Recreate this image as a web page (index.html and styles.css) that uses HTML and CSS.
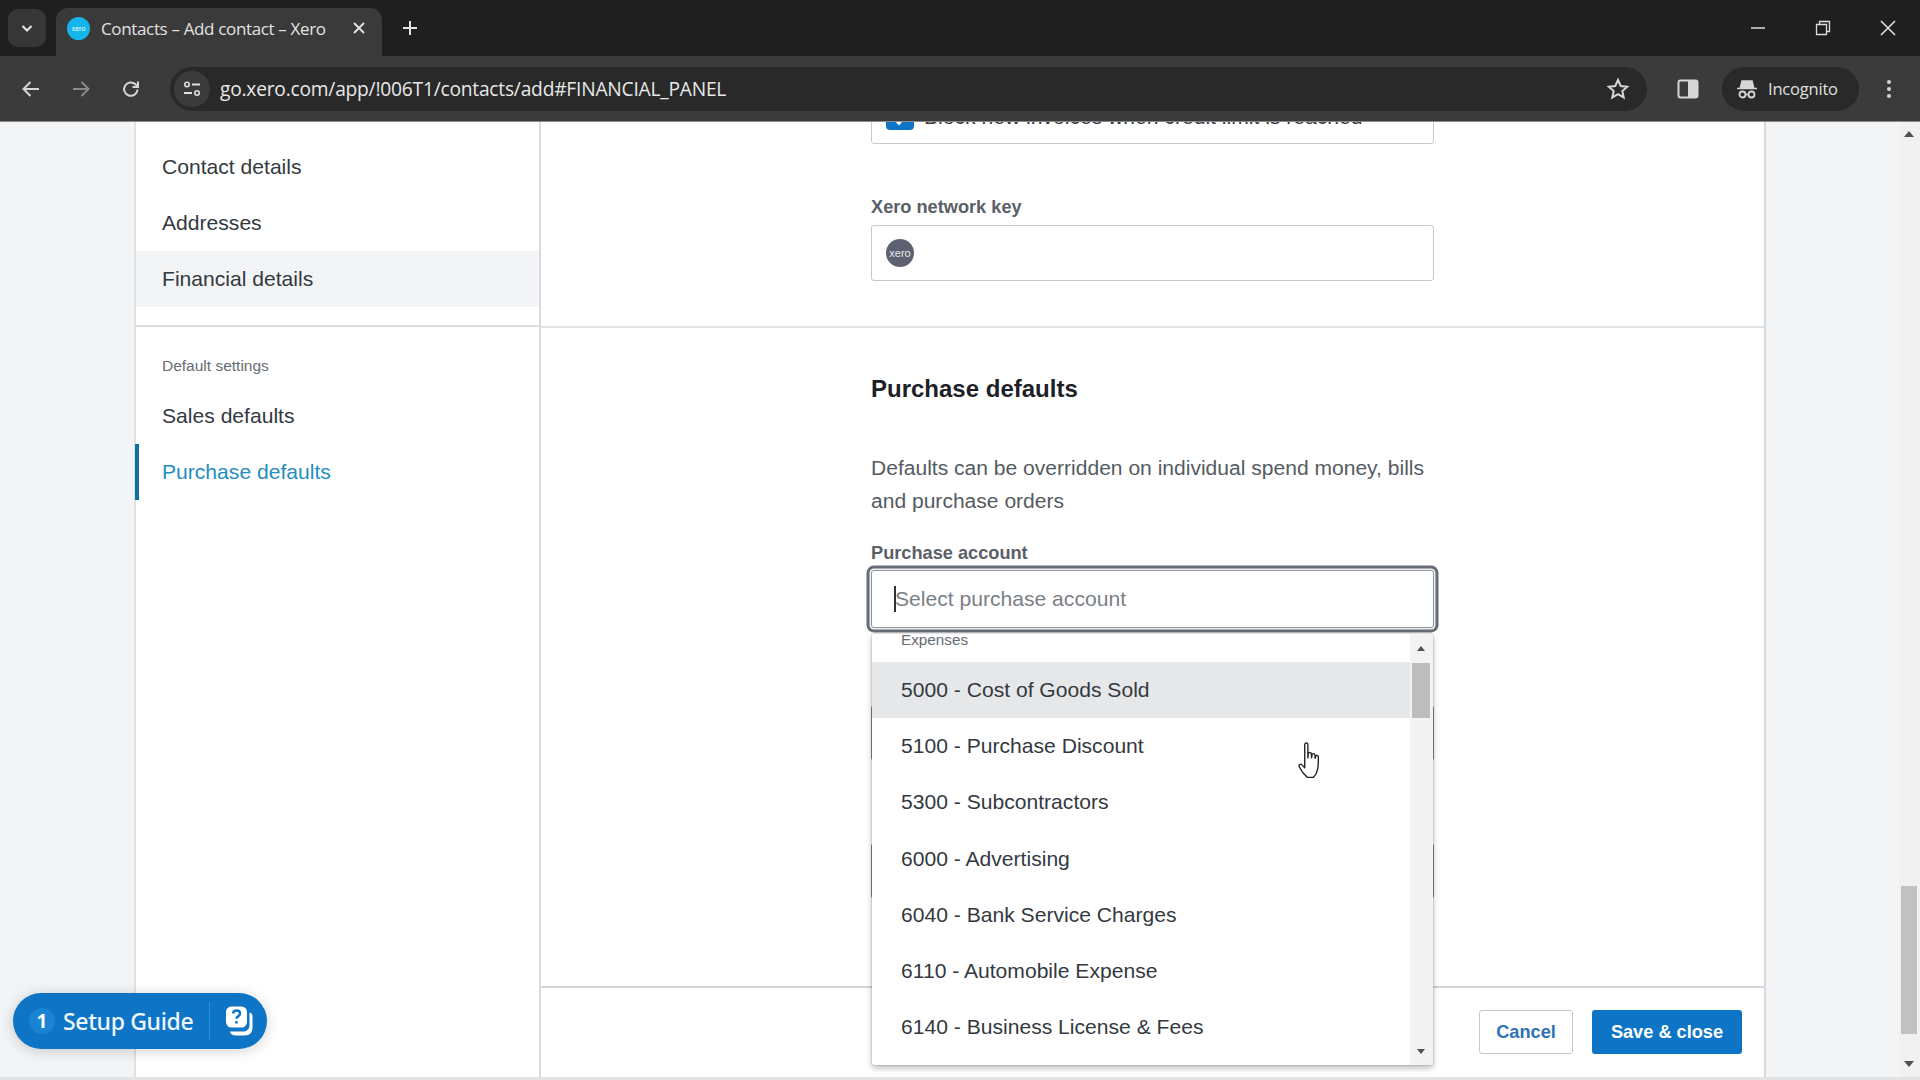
FILE: index.html
```html
<!DOCTYPE html>
<html lang="en">
<head>
<meta charset="utf-8">
<title>Contacts – Add contact – Xero</title>
<link rel="stylesheet" href="styles.css">
</head>
<body>
<header class="chrome">
  <div class="tabstrip">
    <button class="tab-list" aria-label="Tab list"><svg width="16" height="16" viewBox="0 0 16 16"><path d="M3.5 6l4.5 4.5L12.500 6" fill="none" stroke="#e8e8e8" stroke-width="2"/></svg></button>
    <div class="tab">
      <span class="favicon">xero</span>
      <span class="tab-title">Contacts – Add contact – Xero</span>
      <svg class="tab-close" width="14" height="14" viewBox="0 0 14 14"><path d="M2 2l10 10M12 2L2 12" stroke="#e4e4e4" stroke-width="1.800"/></svg>
    </div>
    <svg class="new-tab" width="18" height="18" viewBox="0 0 18 18"><path d="M9 2v14M2 9h14" stroke="#e4e4e4" stroke-width="2"/></svg>
    <div class="window-controls">
      <svg width="16" height="16" viewBox="0 0 16 16"><path d="M1 8h14" stroke="#dcdcdc" stroke-width="1.500"/></svg>
      <svg width="16" height="16" viewBox="0 0 16 16"><path d="M1.500 4.500h10v10h-10zM4.500 4.500v-3h10v10h-3" fill="none" stroke="#dcdcdc" stroke-width="1.300"/></svg>
      <svg width="16" height="16" viewBox="0 0 16 16"><path d="M1 1l14 14M15 1L1 15" stroke="#e4e4e4" stroke-width="1.500"/></svg>
    </div>
  </div>
  <div class="toolbar">
    <svg class="tool-icon" width="20" height="20" viewBox="0 0 20 20"><path d="M18 10H3M9.500 3l-7 7 7 7" fill="none" stroke="#d6d6d6" stroke-width="2"/></svg>
    <svg class="tool-icon dim" width="20" height="20" viewBox="0 0 20 20"><path d="M2 10h15M10.500 3l7 7-7 7" fill="none" stroke="#8a8a8a" stroke-width="2"/></svg>
    <svg class="tool-icon" width="20" height="20" viewBox="0 0 20 20"><path d="M16.500 10.500a6.700 6.700 0 1 1-2-5.200L17 8M17 2.500V8h-5.500" fill="none" stroke="#d6d6d6" stroke-width="2"/></svg>
    <div class="omnibox">
      <span class="site-info"><svg width="20" height="20" viewBox="0 0 20 20"><circle cx="5" cy="5.500" r="2.200" fill="none" stroke="#e0e0e0" stroke-width="1.600"/><path d="M10 5.500h8M2 14h8" stroke="#e0e0e0" stroke-width="1.800"/><circle cx="15" cy="14" r="2.200" fill="none" stroke="#e0e0e0" stroke-width="1.600"/></svg></span>
      <span class="url">go.xero.com/app/!006T1/contacts/add#FINANCIAL_PANEL</span>
      <svg class="star" width="24" height="24" viewBox="0 0 24 24"><path d="M12 3l2.700 6 6.500.7-4.900 4.300 1.400 6.400L12 17.100l-5.700 3.300 1.400-6.400-4.900-4.300 6.500-.7z" fill="none" stroke="#d6d6d6" stroke-width="2"/></svg>
    </div>
    <svg class="side-panel" width="22" height="20" viewBox="0 0 22 20"><rect x="1.500" y="1.500" width="19" height="17" rx="2" fill="none" stroke="#d6d6d6" stroke-width="2"/><rect x="11" y="2" width="9" height="16" fill="#d6d6d6"/></svg>
    <div class="incognito">
      <svg width="22" height="22" viewBox="0 0 22 22"><path d="M6 3h10l1.500 6h-13zM1 10.500h20" fill="#d6d6d6" stroke="#d6d6d6" stroke-width="1.500"/><circle cx="6.500" cy="16.500" r="3" fill="none" stroke="#d6d6d6" stroke-width="1.800"/><circle cx="15.500" cy="16.500" r="3" fill="none" stroke="#d6d6d6" stroke-width="1.800"/><path d="M9.500 16.500h3" stroke="#d6d6d6" stroke-width="1.500"/></svg>
      <span>Incognito</span>
    </div>
    <svg class="menu" width="6" height="20" viewBox="0 0 6 20"><circle cx="3" cy="3" r="2" fill="#d6d6d6"/><circle cx="3" cy="10" r="2" fill="#d6d6d6"/><circle cx="3" cy="17" r="2" fill="#d6d6d6"/></svg>
  </div>
</header>

<div class="viewport">
  <div class="page">
    <div class="panel">
      <nav class="sidebar">
        <a class="nav-item">Contact details</a>
        <a class="nav-item">Addresses</a>
        <a class="nav-item hovered">Financial details</a>
        <hr class="nav-rule">
        <div class="nav-heading">Default settings</div>
        <a class="nav-item">Sales defaults</a>
        <a class="nav-item current">Purchase defaults</a>
      </nav>
      <main class="main">
        <div class="scroll-area">
          <section class="section first">
            <div class="field-box check-box">
              <span class="checkbox"><svg width="14" height="14" viewBox="0 0 14 14"><path d="M3 7l3 3 5-6" fill="none" stroke="#fff" stroke-width="2"/></svg></span>
              <span>Block new invoices when credit limit is reached</span>
            </div>
            <label class="label network-label">Xero network key</label>
            <div class="field-box network-box"><span class="xero-badge">xero</span></div>
          </section>
          <section class="section second">
            <h2 class="section-title">Purchase defaults</h2>
            <p class="section-desc">Defaults can be overridden on individual spend money, bills and purchase orders</p>
            <label class="label purchase-label">Purchase account</label>
            <div class="field-box focused"><span class="caret"></span><span class="placeholder">Select purchase account</span></div>
            <div class="field-box hidden-field one"></div>
            <div class="field-box hidden-field two"></div>
          </section>
        </div>
        <footer class="actions">
          <button class="btn btn-cancel">Cancel</button>
          <button class="btn btn-save">Save &amp; close</button>
        </footer>
      </main>
    </div>
  </div>
  <aside class="page-scrollbar">
    <span class="arrow-up"></span>
    <span class="page-thumb"></span>
    <span class="arrow-down"></span>
  </aside>

  <div class="dropdown">
    <div class="options">
      <div class="group-label">Expenses</div>
      <div class="option active">5000 - Cost of Goods Sold</div>
      <div class="option">5100 - Purchase Discount</div>
      <div class="option">5300 - Subcontractors</div>
      <div class="option">6000 - Advertising</div>
      <div class="option">6040 - Bank Service Charges</div>
      <div class="option">6110 - Automobile Expense</div>
      <div class="option">6140 - Business License &amp; Fees</div>
    </div>
    <div class="dd-scrollbar">
      <span class="arrow-up small"></span>
      <span class="dd-thumb"></span>
      <span class="arrow-down small"></span>
    </div>
  </div>

  <div class="setup-guide">
    <span class="setup-count">1</span>
    <span class="setup-text">Setup Guide</span>
    <span class="setup-sep"></span>
    <svg width="30" height="32" viewBox="0 0 30 32"><path d="M25.500 7.500c2 .5 3 1.500 3 4v11c0 5-3 8-7.500 8h-9c-3.500 0-5.500-1.500-6-4h13c4 0 6.500-2.500 6.500-6.500z" fill="#fff"/><rect x="2" y="1.500" width="21" height="21" rx="5.500" fill="#fff"/><path d="M9 8.500c.3-2 1.800-3 3.600-3 2 0 3.400 1.200 3.400 3 0 2.600-3.300 2.800-3.400 5.200M12.400 16v2.500" fill="none" stroke="#0e75c6" stroke-width="2.500"/></svg>
  </div>

  <svg class="hand-cursor" width="26" height="38" viewBox="0 0 24 36"><path d="M7 2.500c0-2 3-2 3 0V15l.4-4c.2-1.500 2.600-1.500 2.800 0l.3 4 .4-3c.2-1.500 2.600-1.300 2.700.2l.3 3.300.5-2c.4-1.300 2.500-1 2.500.5 0 5 .1 8.500-.7 12-.7 3.500-2.300 6-4 7.500H9.500C6.500 31 3.500 27 1.800 23.500c-.8-1.700 1.200-3.500 2.700-1.800L7 24.500z" fill="#fff" stroke="#222" stroke-width="1.300" stroke-linejoin="round"/></svg>
</div>
<div class="page-bottom"></div>
</body>
</html>
```

FILE: styles.css
```css
* { box-sizing: border-box; }
html, body { margin: 0; height: 100%; overflow: hidden; }
body { display: flex; flex-direction: column; font-family: "Liberation Sans", Arial, sans-serif; color: #2c3238; background: #f2f4f5; }

/* browser chrome */
.chrome { flex: none; font-family: "Open Sans", "Noto Sans", sans-serif; color: #e6e6e6; }
.tabstrip { height: 56px; background: #1f1f1f; display: flex; align-items: flex-end; position: relative; padding-left: 8px; }
.tab-list { width: 38px; height: 38px; margin-bottom: 9px; border: 0; border-radius: 10px; background: #373737; display: flex; align-items: center; justify-content: center; padding: 0; }
.tab { width: 326px; height: 48px; margin-left: 10px; background: #3a3a3a; border-radius: 12px 12px 0 0; display: flex; align-items: center; padding: 0 16px 8px 11px; }
.favicon { width: 23px; height: 23px; border-radius: 50%; background: #13b5ea; color: #fff; font: 7px/23px "Liberation Sans", sans-serif; text-align: center; flex: none; }
.tab-title { margin-left: 11px; font-size: 17px; letter-spacing: -.35px; white-space: nowrap; flex: 1; color: #e2e2e2; }
.new-tab { margin: 0 0 19px 19px; }
.window-controls { margin-left: auto; display: flex; gap: 49px; padding-right: 24px; margin-bottom: 20px; }
.toolbar { height: 66px; background: #3b3b3b; display: flex; align-items: center; border-bottom: 1px solid #8a8a8a; padding-left: 21px; }
.tool-icon { margin-right: 30px; flex: none; }
.tool-icon:nth-child(3) { margin-right: 29px; }
.omnibox { width: 1477px; height: 44px; background: #292929; border-radius: 22px; display: flex; align-items: center; padding: 0 17px 0 4px; }
.site-info { width: 36px; height: 36px; border-radius: 50%; background: #3b3b3b; display: flex; align-items: center; justify-content: center; flex: none; }
.url { margin-left: 10px; font-size: 19.200px; letter-spacing: -.22px; white-space: nowrap; flex: 1; color: #e8e8e8; }
.side-panel { margin-left: 30px; flex: none; }
.incognito { margin-left: 23px; width: 137px; height: 44px; border-radius: 22px; background: #292929; display: flex; align-items: center; gap: 10px; padding-left: 14px; font-size: 16.500px; letter-spacing: -.2px; color: #e0e0e0; flex: none; }
.menu { margin-left: 27px; flex: none; }

/* page */
.viewport { flex: 1; min-height: 0; display: flex; position: relative; }
.page { flex: 1; min-width: 0; padding-left: 134px; padding-right: 133px; background: #f2f4f5; }
.panel { height: 100%; display: flex; background: #fff; border-left: 2px solid #dfe2e4; border-right: 2px solid #d8dbde; }
.sidebar { width: 405px; flex: none; padding-top: 17px; border-right: 2px solid #d8dbde; }
.nav-item { display: flex; align-items: center; height: 56px; padding-left: 26px; font-size: 21.100px; color: #33393f; }
.nav-item.hovered { background: #f2f4f5; }
.nav-item.current { color: #1f8ec0; box-shadow: inset 4px 0 0 #0f6fa8; margin-left: -1px; padding-left: 27px; }
.nav-rule { margin: 18px 0 0; border: 0; border-top: 2px solid #dadde0; }
.nav-heading { height: 61px; padding: 30px 0 0 26px; font-size: 15.500px; line-height: 18px; color: #666c73; }
.main { flex: 1; min-width: 0; display: flex; flex-direction: column; }
.scroll-area { flex: 1; min-height: 0; overflow: hidden; }
.section { padding-left: 330px; }
.section.first { margin-top: -34px; padding-bottom: 45px; border-bottom: 2px solid #e0e3e5; }
.field-box { width: 563px; border: 1.500px solid #c6c9cc; border-radius: 3px; background: #fff; display: flex; align-items: center; }
.check-box { height: 56px; padding-left: 14px; gap: 10px; font-size: 21.100px; color: #33393f; align-items: flex-start; padding-top: 16px; }
.checkbox { width: 28px; height: 28px; border-radius: 4px; background: #0e75c6; display: flex; align-items: flex-end; justify-content: center; padding-bottom: 2px; margin-top: -3px; }
.label { display: block; font-size: 18.200px; line-height: 24px; font-weight: bold; color: #5a6067; }
.network-label { margin-top: 51px; }
.network-box { height: 56px; margin-top: 6px; padding-left: 14px; }
.xero-badge { width: 28px; height: 28px; border-radius: 50%; background: #5e6270; color: #e8e8ec; font-size: 11px; line-height: 28px; text-align: center; }
.section-title { margin: 0; padding-top: 46px; font-size: 24px; line-height: 30px; font-weight: bold; color: #1c2126; }
.section-desc { margin: 47px 0 0; width: 563px; font-size: 21.050px; line-height: 33px; color: #555b62; }
.purchase-label { margin-top: 24px; }
.field-box.focused { height: 58px; margin-top: 5px; padding-left: 22px; border: 1px solid #8f959b; border-radius: 3px; box-shadow: 0 0 0 1.500px #eceef0, 0 0 0 4.500px #666d76; font-size: 21.100px; }
.caret { width: 2px; height: 26px; background: #2c3238; flex: none; }
.placeholder { color: #7a8087; margin-left: -1px; }
.hidden-field { height: 56px; border-color: #888; }
.hidden-field.one { margin-top: 77px; }
.hidden-field.two { margin-top: 82px; }
.actions { flex: none; height: 91px; border-top: 2px solid #d4d6d9; background: #fff; display: flex; justify-content: flex-end; align-items: flex-start; gap: 19px; padding: 22px 22px 0 0; }
.btn { height: 44px; border-radius: 3px; font: bold 18.200px "Liberation Sans", sans-serif; padding: 0; }
.btn-cancel { width: 94px; border: 1.500px solid #c3c7ca; background: #fff; color: #2f72b5; }
.btn-save { width: 150px; border: 0; background: #0e75c6; color: #fff; }

/* page scrollbar */
.page-scrollbar { width: 21px; flex: none; background: #f1f1f1; position: relative; }
.arrow-up, .arrow-down { position: absolute; left: 5px; width: 0; height: 0; border-left: 5px solid transparent; border-right: 5px solid transparent; }
.arrow-up { top: 9px; border-bottom: 6px solid #505050; }
.arrow-down { bottom: 10px; border-top: 6px solid #505050; }
.page-thumb { position: absolute; left: 2px; right: 3px; top: 764px; height: 148px; background: #c1c1c1; }

/* dropdown */
.dropdown { position: absolute; left: 872px; top: 512px; width: 561px; height: 431px; display: flex; background: #fff; border-radius: 0 0 3px 3px; box-shadow: 0 0 0 1px rgba(0,0,0,.08), 0 3px 6px rgba(0,0,0,.28); overflow: hidden; }
.options { flex: 1; min-width: 0; }
.group-label { height: 28px; padding-left: 29px; font-size: 15.300px; line-height: 12px; color: #666c73; }
.option { height: 56.200px; padding-left: 29px; font-size: 21.100px; line-height: 56px; color: #33393f; }
.option.active { background: #e6e7e9; }
.dd-scrollbar { width: 23px; flex: none; background: #f3f3f3; position: relative; }
.dd-thumb { position: absolute; left: 2px; right: 3px; top: 29px; height: 55px; background: #bdbdbd; }
.arrow-up.small { left: 7px; top: 12px; border-left-width: 4px; border-right-width: 4px; border-bottom-width: 5px; }
.arrow-down.small { left: 7px; bottom: 11px; border-left-width: 4px; border-right-width: 4px; border-top-width: 5px; }

/* setup guide */
.setup-guide { position: absolute; left: 13px; top: 871px; width: 254px; height: 56px; border-radius: 28px; background: #0e75c6; color: #fff; display: flex; align-items: center; padding-left: 16px; box-shadow: 0 2px 14px rgba(0,0,0,.18); }
.setup-count { width: 26px; height: 26px; border-radius: 50%; background: #1a83d2; font: bold 19px/26px "Noto Sans", sans-serif; text-align: center; flex: none; }
.setup-text { margin-left: 8px; font: 500 23px "Noto Sans", sans-serif; letter-spacing: -.35px; white-space: nowrap; color: #eef7fd; }
.setup-sep { width: 1px; height: 38px; background: #3a8fd0; margin: 0 14px 0 16px; flex: none; }

.hand-cursor { position: absolute; left: 1297px; top: 620px; }
.page-bottom { flex: none; height: 3px; background: #e2e3e4; }
```
